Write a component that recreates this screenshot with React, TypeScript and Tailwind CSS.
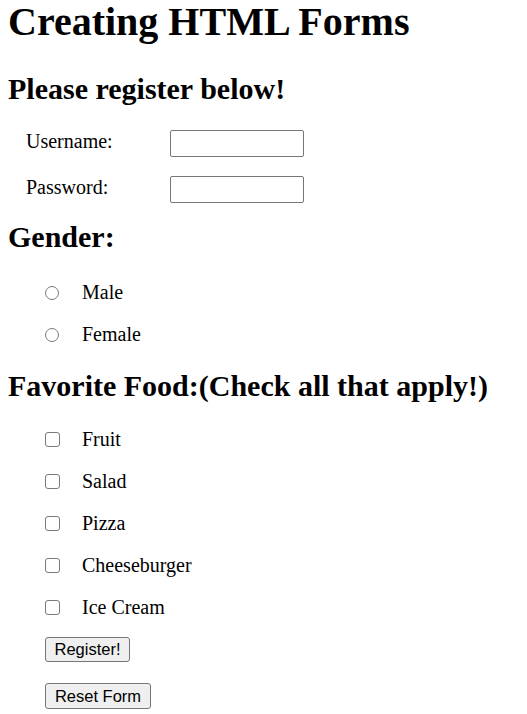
import React from "react";

const serif = { fontFamily: '"Liberation Serif", "Times New Roman", serif' };

function Radio() {
  return (
    <span className="mt-[15px] block h-[14px] w-[14px] self-start rounded-full border border-[#7a7a7a] bg-white" />
  );
}

function Check() {
  return (
    <span className="mt-[14px] block h-[15px] w-[15px] self-start rounded-[3px] border border-[#7a7a7a] bg-white" />
  );
}

function OptionRow({ label, kind }: { label: string; kind: "radio" | "check" }) {
  return (
    <div className="flex h-[42px] pl-[37px]">
      <div className="w-[37px] flex">{kind === "radio" ? <Radio /> : <Check />}</div>
      <span className="text-[20px] leading-[42px] text-black">{label}</span>
    </div>
  );
}

export default function App() {
  return (
    <div className="min-h-[714px] w-full bg-white pl-[8px] text-black" style={serif}>
      <h1 className="h-[43px] text-[40px] font-bold leading-[43px]">Creating HTML Forms</h1>
      <h2 className="mt-[28px] text-[30px] font-bold leading-[36px]">Please register below!</h2>

      <div className="mt-[23px] flex h-[27px] pl-[18px]">
        <span className="w-[144px] text-[20px] leading-[23px]">Username:</span>
        <div className="h-[27px] w-[134px] rounded-[2px] border border-[#767676] bg-white" />
      </div>
      <div className="mt-[19px] flex h-[27px] pl-[18px]">
        <span className="w-[144px] text-[20px] leading-[23px]">Password:</span>
        <div className="h-[27px] w-[134px] rounded-[2px] border border-[#767676] bg-white" />
      </div>

      <h2 className="mt-[16px] text-[30px] font-bold leading-[36px]">Gender:</h2>
      <div className="mt-[16px]">
        <OptionRow label="Male" kind="radio" />
        <OptionRow label="Female" kind="radio" />
      </div>

      <h2 className="mt-[13px] text-[30px] font-bold leading-[36px]">Favorite Food:(Check all that apply!)</h2>
      <div className="mt-[14px]">
        <OptionRow label="Fruit" kind="check" />
        <OptionRow label="Salad" kind="check" />
        <OptionRow label="Pizza" kind="check" />
        <OptionRow label="Cheeseburger" kind="check" />
        <OptionRow label="Ice Cream" kind="check" />
      </div>

      <div className="pl-[37px]">
        <button
          className="mt-[9px] flex h-[25px] w-[85px] items-center justify-center rounded-[3px] border border-[#767676] bg-[#efefef] text-[16.5px] text-black"
          style={{ fontFamily: '"Liberation Sans", Arial, sans-serif' }}
        >
          Register!
        </button>
        <button
          className="mt-[21px] flex h-[26px] w-[106px] items-center justify-center rounded-[3px] border border-[#767676] bg-[#efefef] text-[16.5px] text-black"
          style={{ fontFamily: '"Liberation Sans", Arial, sans-serif' }}
        >
          Reset Form
        </button>
      </div>
    </div>
  );
}
